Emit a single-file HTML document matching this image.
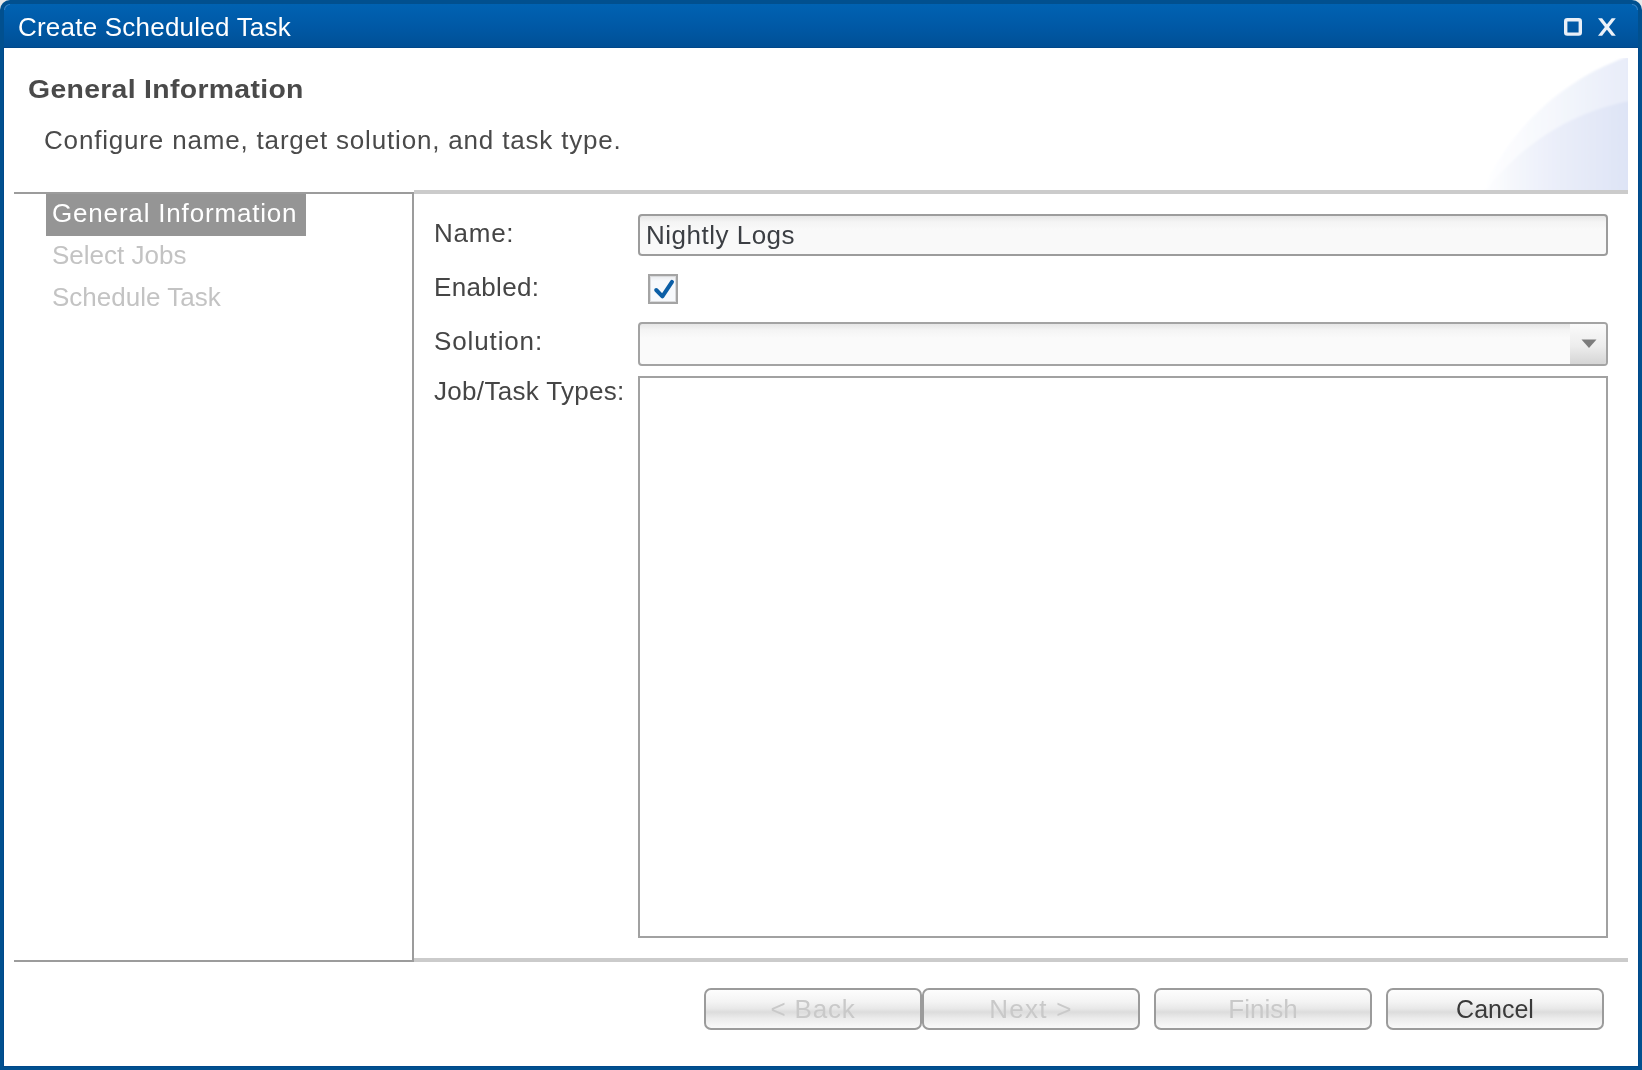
<!DOCTYPE html>
<html>
<head>
<meta charset="utf-8">
<style>
html,body{margin:0;padding:0;}
body{width:1642px;height:1070px;overflow:hidden;position:relative;background:#e9e9e9;font-family:"Liberation Sans",sans-serif;-webkit-font-smoothing:antialiased;}
.a{position:absolute;}
.t{position:absolute;white-space:nowrap;line-height:1;font-size:26px;will-change:transform;}
#win{left:0;top:0;width:1642px;height:1070px;background:#01508f;border-radius:10px 10px 0 0;}
#title{left:4px;top:4px;width:1634px;height:44px;border-radius:6px 6px 0 0;background:linear-gradient(#0062b2,#0059a6 50%,#004f95);}
#content{left:4px;top:48px;width:1634px;height:1018px;background:#fff;box-shadow:0 0 0 1px #00488a;}
.lbl{color:#454545;}
.btn{position:absolute;top:988px;width:214px;height:38px;border:2px solid #9b9b9b;border-radius:7px;
 background:linear-gradient(#fdfdfd 0%,#f4f4f4 30%,#e9e9e9 48%,#dcdcdc 58%,#ececec 75%,#f9f9f9 100%);}
.btn span{will-change:transform;position:absolute;left:0;right:0;text-align:center;top:6px;font-size:26px;line-height:1;white-space:nowrap;}
</style>
</head>
<body>
<div id="win" class="a"></div>
<div id="title" class="a"></div>
<svg class="a" style="left:0;top:0" width="1642" height="20" viewBox="0 0 1642 20"><path d="M4.5 10 A5.5 5.5 0 0 1 10 4.5" fill="none" stroke="#4a8ccc" stroke-width="1.1" opacity="0.75"/><path d="M1632 4.5 A5.5 5.5 0 0 1 1637.5 10" fill="none" stroke="#4a8ccc" stroke-width="1.1" opacity="0.75"/></svg>
<div class="t" style="left:18px;top:14px;color:#fff;letter-spacing:0.22px;">Create Scheduled Task</div>
<!-- maximize / close -->
<svg class="a" style="left:1556px;top:10px" width="70" height="34" viewBox="0 0 70 34">
  <rect x="9.7" y="9.8" width="14.6" height="14.3" rx="1.6" fill="none" stroke="#e9eff7" stroke-width="3.4"/>
  <polygon points="42,8.2 46.1,8.2 59.8,25.8 55.7,25.8" fill="#edf2f9"/>
  <polygon points="55.7,8.2 59.8,8.2 46.1,25.8 42,25.8" fill="#edf2f9"/>
</svg>
<div id="content" class="a"></div>

<!-- header -->
<div class="t" style="left:28px;top:76px;color:#4a4a4a;font-weight:bold;font-size:26.4px;letter-spacing:0.3px;transform:scaleX(1.075);transform-origin:0 0;">General Information</div>
<div class="t" style="left:44px;top:127px;color:#4a4a4a;letter-spacing:0.82px;">Configure name, target solution, and task type.</div>

<!-- swoosh -->
<svg class="a" style="left:1460px;top:58px" width="168" height="132" viewBox="0 0 168 132">
  <defs>
    <linearGradient id="g1" gradientUnits="userSpaceOnUse" x1="20" y1="0" x2="168" y2="0">
      <stop offset="0" stop-color="#ffffff"/>
      <stop offset="0.45" stop-color="#f6f8fd"/>
      <stop offset="0.75" stop-color="#eef2fa"/>
      <stop offset="1" stop-color="#e8ecf9"/>
    </linearGradient>
    <linearGradient id="g2" gradientUnits="userSpaceOnUse" x1="20" y1="0" x2="168" y2="0">
      <stop offset="0" stop-color="#ffffff"/>
      <stop offset="0.25" stop-color="#f4f6fc"/>
      <stop offset="0.55" stop-color="#e9edf9"/>
      <stop offset="1" stop-color="#dee4f6"/>
    </linearGradient>
    <filter id="bl" x="-5%" y="-5%" width="110%" height="110%"><feGaussianBlur stdDeviation="1"/></filter>
  </defs>
  <g filter="url(#bl)">
  <path d="M22.4 134 L22.4 132 C51 69 104.5 20.5 168 -1.5 L172 -1.5 L172 136 L20 136 Z" fill="url(#g1)"/>
  <path d="M26 134 L26 132 C60.7 86.8 111.6 54.4 168 43.3 L172 43.3 L172 136 L24 136 Z" fill="url(#g2)"/>
  </g>
</svg>

<!-- separators / left panel -->
<div class="a" style="left:14px;top:192px;width:398px;height:766px;border-top:2px solid #9c9c9c;border-right:2px solid #9c9c9c;border-bottom:2px solid #9c9c9c;"></div>
<div class="a" style="left:414px;top:190px;width:1214px;height:4px;background:#cbcbcb;"></div>
<div class="a" style="left:414px;top:958px;width:1214px;height:4px;background:#cbcbcb;"></div>

<!-- nav -->
<div class="a" style="left:46px;top:194px;width:260px;height:42px;background:#959595;"></div>
<div class="t" style="left:52px;top:200px;color:#fff;letter-spacing:0.82px;">General Information</div>
<div class="t" style="left:52px;top:242px;color:#c3c3c3;">Select Jobs</div>
<div class="t" style="left:52px;top:284px;color:#c3c3c3;">Schedule Task</div>

<!-- form labels -->
<div class="t lbl" style="left:434px;top:220px;letter-spacing:0.75px;">Name:</div>
<div class="t lbl" style="left:434px;top:274px;letter-spacing:0.33px;">Enabled:</div>
<div class="t lbl" style="left:434px;top:328px;letter-spacing:0.875px;">Solution:</div>
<div class="t lbl" style="left:434px;top:378px;letter-spacing:0.31px;">Job/Task Types:</div>

<!-- name input -->
<div class="a" style="left:638px;top:214px;width:966px;height:38px;border:2px solid #9c9c9c;border-radius:4px;background:linear-gradient(#e6e6e6,#f4f4f4 6px,#f9f9f9 14px,#f9f9f9);"></div>
<div class="t" style="left:646px;top:222px;color:#3c3f44;letter-spacing:0.5px;">Nightly Logs</div>

<!-- checkbox -->
<div class="a" style="left:648px;top:274px;width:26px;height:26px;border:2px solid #a4a4a4;box-shadow:inset 0 0 0 1px #d9dadc;background:linear-gradient(#e9ebee,#f7f9fc 5px,#f7f9fc);"></div>
<svg class="a" style="left:648px;top:274px" width="30" height="30" viewBox="0 0 30 30">
  <path d="M8.2 16.0 L14.4 22.3 L24.0 7.8" fill="none" stroke="#0b5ea6" stroke-width="4" stroke-linecap="round" stroke-linejoin="round"/>
</svg>

<!-- solution combo -->
<div class="a" style="left:638px;top:322px;width:966px;height:40px;border:2px solid #a3a3a3;border-radius:4px;background:linear-gradient(#e6e6e6,#f4f4f4 6px,#fafafa 14px,#fafafa);overflow:hidden;">
  <div class="a" style="right:0;top:0;width:36px;height:40px;background:linear-gradient(#fafafa,#ededed 55%,#d5d5d5);"></div>
</div>
<svg class="a" style="left:1580px;top:338px" width="18" height="12" viewBox="0 0 18 12">
  <path d="M1.5 1.5 L16.5 1.5 L9 10 Z" fill="#7c7c7c"/>
</svg>

<!-- listbox -->
<div class="a" style="left:638px;top:376px;width:966px;height:558px;border:2px solid #a1a1a1;background:#fff;"></div>

<!-- buttons -->
<div class="btn" style="left:704px;"><span style="color:#c9c9c9;letter-spacing:0.8px;">&lt; Back</span></div>
<div class="btn" style="left:922px;"><span style="color:#c9c9c9;letter-spacing:1.28px;">Next &gt;</span></div>
<div class="btn" style="left:1154px;"><span style="color:#c9c9c9;">Finish</span></div>
<div class="btn" style="left:1386px;"><span style="color:#3a3a3a;font-size:25px;top:6.5px;">Cancel</span></div>
</body>
</html>
